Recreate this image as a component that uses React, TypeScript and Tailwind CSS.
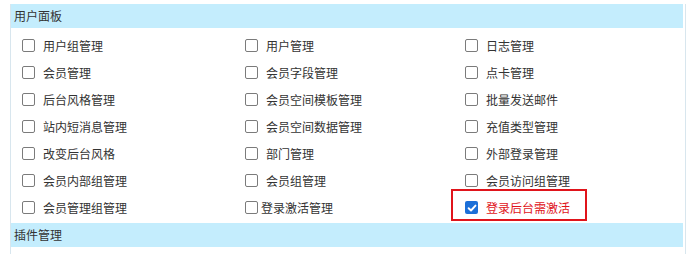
import React from 'react';

type Item = { label: string; checked?: boolean; tight?: boolean; mark?: boolean };

const rows: Item[][] = [
  [{ label: '用户组管理' }, { label: '用户管理' }, { label: '日志管理' }],
  [{ label: '会员管理' }, { label: '会员字段管理' }, { label: '点卡管理' }],
  [{ label: '后台风格管理' }, { label: '会员空间模板管理' }, { label: '批量发送邮件' }],
  [{ label: '站内短消息管理' }, { label: '会员空间数据管理' }, { label: '充值类型管理' }],
  [{ label: '改变后台风格' }, { label: '部门管理' }, { label: '外部登录管理' }],
  [{ label: '会员内部组管理' }, { label: '会员组管理' }, { label: '会员访问组管理' }],
  [
    { label: '会员管理组管理' },
    { label: '登录激活管理', tight: true },
    { label: '登录后台需激活', checked: true, mark: true },
  ],
];

function Box({ checked }: { checked?: boolean }) {
  if (checked) {
    return (
      <span className="w-[13px] h-[13px] rounded-[2px] bg-[#1b6fd8] flex items-center justify-center shrink-0">
        <svg width="10" height="10" viewBox="0 0 10 10">
          <path d="M1.6 5.2 L4 7.5 L8.5 2.6" fill="none" stroke="#fff" strokeWidth="1.9" strokeLinecap="round" strokeLinejoin="round" />
        </svg>
      </span>
    );
  }
  return <span className="w-[13px] h-[13px] rounded-[2px] border-[1.5px] border-[#7b7b7b] bg-white shrink-0" />;
}

function Cell({ item }: { item: Item }) {
  return (
    <div className="h-[27px] pl-[11px] flex items-center">
      <div className="relative flex items-center">
        <Box checked={item.checked} />
        <span className={`${item.tight ? 'ml-[3px]' : 'ml-[8px]'} ${item.mark ? 'text-[#e0141b]' : 'text-[#333]'} text-[12px] leading-none`}>
          {item.label}
        </span>
        {item.mark && (
          <div className="absolute left-[-14px] top-[-12px] w-[136px] h-[32px] border-2 border-[#e0141b]" />
        )}
      </div>
    </div>
  );
}

function Header({ title }: { title: string }) {
  return (
    <div className="h-[24px] mr-[2px] bg-[#c4edfd] pl-[3px] flex items-center text-[12px] text-[#333]">{title}</div>
  );
}

export default function App() {
  return (
    <div className="w-[688px] h-[254px] bg-white overflow-hidden pt-[4px]" style={{ fontFamily: '"Noto Sans CJK SC", "Noto Sans", sans-serif' }}>
      <div className="ml-[10px] w-[676px] h-[260px] border-l border-r border-[#d8e6ee]">
        <Header title="用户面板" />
        <div className="pt-[4px] pb-[2px] grid grid-cols-[223px_220px_1fr]">
          {rows.map((row, r) => row.map((item, c) => <Cell key={`${r}-${c}`} item={item} />))}
        </div>
        <Header title="插件管理" />
      </div>
    </div>
  );
}
